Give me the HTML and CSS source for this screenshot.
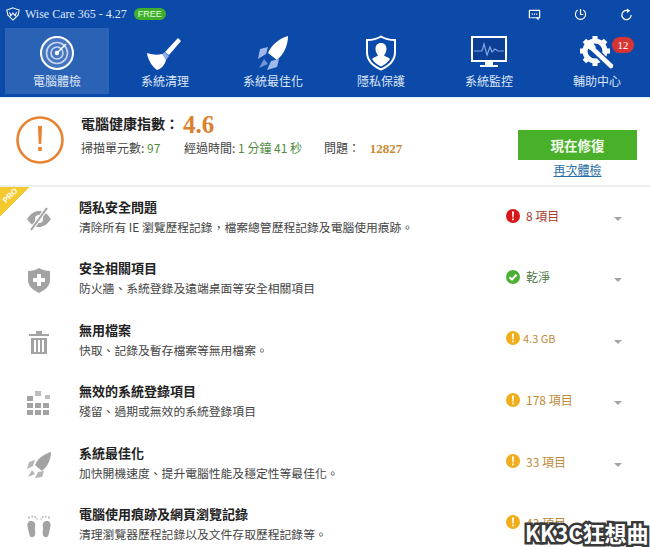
FILE: index.html
```html
<!DOCTYPE html>
<html lang="zh-Hant">
<head>
<meta charset="utf-8">
<title>Wise Care 365</title>
<link rel="stylesheet" href="styles.css">
</head>
<body>
<div class="app">
  <header class="head">
    <div class="titlebar">
      <svg class="logo" viewBox="0 0 16 16" width="14" height="14"><path d="M8 1 15 3.5 14 9 8 15 2 9 1 3.5Z" fill="none" stroke="#fff" stroke-width="1.2"/><path d="M4 6 5.5 10 8 7 10.5 10 12 6" fill="none" stroke="#fff" stroke-width="1.2"/></svg>
      <span class="apptitle">Wise Care 365 - 4.27</span>
      <span class="free">FREE</span>
      <span class="winbtns">
        <svg viewBox="0 0 14 14" width="13" height="13"><path d="M1.5 2.5H12.5V10.5H3.5M1.5 2.5V10.5H3" fill="none" stroke="#fff" stroke-width="1.3"/><path d="M4 6.5H5.3M6.4 6.5H7.7M8.8 6.5H10" stroke="#fff" stroke-width="1.4"/><path d="M11 10.5V12.5L9 10.5" fill="#fff" stroke="#fff"/></svg>
        <svg viewBox="0 0 14 14" width="13" height="13"><path d="M4 2.2A5.5 5.5 0 1 0 10 2.2" fill="none" stroke="#fff" stroke-width="1.2"/><path d="M7 1V7H10" fill="none" stroke="#fff" stroke-width="1.3"/></svg>
        <svg viewBox="0 0 14 14" width="13" height="13"><path d="M9.5 3.2A5 5 0 1 0 12 7.5" fill="none" stroke="#fff" stroke-width="1.3"/><path d="M7.5 0.5V5.5L11 3Z" fill="#fff"/></svg>
      </span>
    </div>
    <nav class="nav">
      <div class="navitem active">
        <svg viewBox="0 0 36 36" width="36" height="36"><circle cx="18" cy="18" r="16" fill="#7f9fd6" fill-opacity=".35" stroke="#fff" stroke-width="2"/><circle cx="18" cy="18" r="10.5" fill="none" stroke="#c7d6f0" stroke-width="1.6"/><circle cx="18" cy="18" r="6" fill="none" stroke="#c7d6f0" stroke-width="1.6"/><circle cx="18" cy="18" r="2.2" fill="#fff"/><path d="M18 18 27 9" stroke="#fff" stroke-width="1.5"/></svg>
        <span>電腦體檢</span>
      </div>
      <div class="navitem">
        <svg viewBox="0 0 40 36" width="40" height="36"><path d="M20 17 33 3 36 6 24 20Z" fill="#fff"/><path d="M20 17 24 21 21 25 16 20Z" fill="#8fb0e6"/><path d="M2 18C8 20 13 20 17 19L21 25C20 30 16 34 12 35 8 32 3 26 2 18Z" fill="#fff"/></svg>
        <span>系統清理</span>
      </div>
      <div class="navitem">
        <svg viewBox="0 0 36 36" width="36" height="36"><path d="M33 1C33 10 29 19 22 25L13 18C17 9 25 3 33 1Z" fill="#fff"/><path d="M13 12 5 14 3 24 11 19ZM24 24 22 32 12 35 16 26Z" fill="#9db9ea"/><path d="M9 24 4 33 13 29Z" fill="#6f95dc"/></svg>
        <span>系統最佳化</span>
      </div>
      <div class="navitem">
        <svg viewBox="0 0 32 36" width="32" height="36"><path d="M16 1.5C20 4 25 5 30 5V17C30 25 24 31 16 34.5 8 31 2 25 2 17V5C7 5 12 4 16 1.5Z" fill="none" stroke="#fff" stroke-width="2"/><path d="M16 8C19.5 8 21.5 10.5 21.5 14 21.5 17 20 19 19 20.5 21 22 24 22.5 25 24 23 27 20 30 16 31.500 12 30 9 27 7 24 8 22.500 11 22 13 20.500 12 19 10.500 17 10.500 14 10.500 10.500 12.500 8 16 8Z" fill="#fff"/></svg>
        <span>隱私保護</span>
      </div>
      <div class="navitem">
        <svg viewBox="0 0 36 36" width="36" height="36"><rect x="1" y="2" width="34" height="24" fill="#0c3f94" stroke="#fff" stroke-width="2"/><path d="M3 16H11L13 9 16 20 19 12 21 17 24 14 27 16H33" fill="none" stroke="#7fa4e4" stroke-width="1.2"/><path d="M14 27H22V30H27V32H9V30H14Z" fill="#fff"/></svg>
        <span>系統監控</span>
      </div>
      <div class="navitem">
        <span class="gear">
          <svg viewBox="0 0 36 36" width="36" height="36"><circle cx="16" cy="16" r="10" fill="none" stroke="#fff" stroke-width="5"/><path d="M16 1V6M16 26V31M1 16H6M26 16H31M5.400 5.400 9 9M23 23 26.600 26.600M26.600 5.400 23 9M9 23 5.400 26.600" stroke="#fff" stroke-width="5"/><path d="M13 13 31 31" stroke="#0b4aa9" stroke-width="8"/><path d="M14 14 32 31" stroke="#fff" stroke-width="4.500" stroke-linecap="round"/><path d="M9 9 14 8 17 12 13 16 8 13Z" fill="#fff"/></svg>
          <b class="badge">12</b>
        </span>
        <span>輔助中心</span>
      </div>
    </nav>
  </header>

  <section class="summary">
    <svg class="bigalert" viewBox="0 0 48 48" width="48" height="48"><circle cx="24" cy="24" r="22.500" fill="none" stroke="#e8822e" stroke-width="2.600"/><path d="M22 10H26L25.300 28H22.700Z" fill="#e8822e"/><rect x="22.200" y="31" width="3.600" height="4" fill="#e8822e"/></svg>
    <div class="sumtext">
      <div class="sumhead"><strong>電腦健康指數：</strong><em class="score">4.6</em></div>
      <div class="sumstats">
        <span>掃描單元數: <i class="good">97</i></span>
        <span>經過時間: <i class="good">1 分鐘 41 秒</i></span>
        <span>問題： <b class="count">12827</b></span>
      </div>
    </div>
    <div class="actions">
      <button class="fix">現在修復</button>
      <a class="again" href="#">再次體檢</a>
    </div>
  </section>

  <main class="list">
    <span class="pro"><span>PRO</span></span>
    <div class="row">
      <svg class="rowicon" viewBox="0 0 28 28" width="28" height="28"><path d="M2 14C6 8 10 6 14 6S22 8 26 14C22 20 18 22 14 22S6 20 2 14Z" fill="#a3a3a3"/><circle cx="14" cy="14" r="4" fill="#fff"/><path d="M6 25 22 3" stroke="#fff" stroke-width="4"/><path d="M6 25 22 3" stroke="#a3a3a3" stroke-width="2"/></svg>
      <div class="rowtext"><h3>隱私安全問題</h3><p>清除所有 IE 瀏覽歷程記錄，檔案總管歷程記錄及電腦使用痕跡。</p></div>
      <div class="status red"><svg viewBox="0 0 14 14" width="14" height="14"><circle cx="7" cy="7" r="7" fill="#d81818"/><path d="M6 2.500H8L7.600 8.500H6.400ZM6.200 9.500H7.800V11.200H6.200Z" fill="#fff"/></svg><span>8 項目</span></div>
      <span class="arrow"></span>
    </div>
    <div class="row">
      <svg class="rowicon" viewBox="0 0 28 28" width="28" height="28"><path d="M14 2C17 4 21 5 25 5V14C25 20 20 24 14 27 8 24 3 20 3 14V5C7 5 11 4 14 2Z" fill="#a3a3a3"/><path d="M12 8H16V12H20V16H16V20H12V16H8V12H12Z" fill="#fff"/></svg>
      <div class="rowtext"><h3>安全相關項目</h3><p>防火牆、系統登錄及遠端桌面等安全相關項目</p></div>
      <div class="status green"><svg viewBox="0 0 14 14" width="14" height="14"><circle cx="7" cy="7" r="7" fill="#4cb034"/><path d="M3.500 7.200 6 9.500 10.500 4.800" fill="none" stroke="#fff" stroke-width="2"/></svg><span>乾淨</span></div>
      <span class="arrow"></span>
    </div>
    <div class="row">
      <svg class="rowicon" viewBox="0 0 28 28" width="28" height="28"><path d="M4 6H24V8H4ZM11 3H17V6H11Z" fill="#a3a3a3"/><path d="M6 10H22V26H6Z" fill="#a3a3a3"/><path d="M10 12V24M14 12V24M18 12V24" stroke="#fff" stroke-width="2"/></svg>
      <div class="rowtext"><h3>無用檔案</h3><p>快取、記錄及暫存檔案等無用檔案。</p></div>
      <div class="status amber tight"><svg viewBox="0 0 14 14" width="14" height="14"><circle cx="7" cy="7" r="7" fill="#f0ae1c"/><path d="M6 2.500H8L7.600 8.500H6.400ZM6.200 9.500H7.800V11.200H6.200Z" fill="#fff"/></svg><span>4.3 GB</span></div>
      <span class="arrow"></span>
    </div>
    <div class="row">
      <svg class="rowicon" viewBox="0 0 28 28" width="28" height="28" fill="#a3a3a3"><rect x="2" y="7" width="6" height="5"/><rect x="10" y="2" width="6" height="5" fill="#bdbdbd"/><rect x="2" y="14" width="6" height="5"/><rect x="10" y="14" width="6" height="5"/><rect x="2" y="21" width="6" height="5"/><rect x="10" y="21" width="6" height="5"/><rect x="18" y="21" width="6" height="5"/><rect x="18" y="14" width="6" height="5"/><rect x="20" y="6" width="5" height="4" fill="#bdbdbd"/></svg>
      <div class="rowtext"><h3>無效的系統登錄項目</h3><p>殘留、過期或無效的系統登錄項目</p></div>
      <div class="status amber"><svg viewBox="0 0 14 14" width="14" height="14"><circle cx="7" cy="7" r="7" fill="#f0ae1c"/><path d="M6 2.500H8L7.600 8.500H6.400ZM6.200 9.500H7.800V11.200H6.200Z" fill="#fff"/></svg><span>178 項目</span></div>
      <span class="arrow"></span>
    </div>
    <div class="row">
      <svg class="rowicon" viewBox="0 0 28 28" width="28" height="28"><path d="M26 1C26 8 23 15 17 20L10 14C13 7 19 3 26 1Z" fill="#a3a3a3"/><path d="M10 9 4 11 2 18 8 15ZM19 20 17 26 10 27 13 21ZM7 19 3 26 10 23Z" fill="#b5b5b5"/></svg>
      <div class="rowtext"><h3>系統最佳化</h3><p>加快開機速度、提升電腦性能及穩定性等最佳化。</p></div>
      <div class="status amber"><svg viewBox="0 0 14 14" width="14" height="14"><circle cx="7" cy="7" r="7" fill="#f0ae1c"/><path d="M6 2.500H8L7.600 8.500H6.400ZM6.200 9.500H7.800V11.200H6.200Z" fill="#fff"/></svg><span>33 項目</span></div>
      <span class="arrow"></span>
    </div>
    <div class="row">
      <svg class="rowicon" viewBox="0 0 28 28" width="28" height="28" fill="#a3a3a3"><path d="M6 9C9 9 11 11 10 15 9.500 18 11 20 10 23 9 26 5 26 4.500 23 4 20 3 18 2.500 14 2 11 3.500 9 6 9Z"/><path d="M22 9C19 9 17 11 18 15 18.500 18 17 20 18 23 19 26 23 26 23.500 23 24 20 25 18 25.500 14 26 11 24.500 9 22 9Z"/><path d="M3 5.500H5M6.500 4.500H8M9.500 5H11M11.500 7H12.500M15.500 7H16.500M17 5H18.500M20 4.500H21.500M23 5.500H25" stroke="#bdbdbd" stroke-width="2"/></svg>
      <div class="rowtext"><h3>電腦使用痕跡及網頁瀏覽記錄</h3><p>清理瀏覽器歷程記錄以及文件存取歷程記錄等。</p></div>
      <div class="status amber"><svg viewBox="0 0 14 14" width="14" height="14"><circle cx="7" cy="7" r="7" fill="#f0ae1c"/><path d="M6 2.500H8L7.600 8.500H6.400ZM6.200 9.500H7.800V11.200H6.200Z" fill="#fff"/></svg><span>43 項目</span></div>
      <span class="arrow"></span>
    </div>
  </main>
  <div class="watermark">KK3C狂想曲</div>
</div>
</body>
</html>
```
FILE: styles.css
```css
* { box-sizing: border-box; }
html, body { margin: 0; padding: 0; background: #fff; }
body { font-family: "Noto Sans CJK TC", "Liberation Sans", sans-serif; color: #333; }
.app { position: relative; width: 650px; height: 547px; overflow: hidden; }

.head { height: 98px; background: #0b4aa9; border-bottom: 1px solid #e6f2fb; color: #fff; }
.titlebar { display: flex; align-items: center; height: 28px; padding: 0 17px 0 6px; }
.logo { margin-right: 5px; }
.apptitle { font: 12px "Liberation Serif", serif; color: #dfe8f6; }
.free { margin-left: 7px; width: 32px; height: 12px; border-radius: 6px; background: #3fb02b; color: #e6ffe0; font: 9px/12px "Liberation Sans", sans-serif; text-align: center; }
.winbtns { margin-left: auto; display: flex; gap: 33px; }
.nav { display: grid; grid-template-columns: repeat(6, 108px); padding-left: 3px; }
.navitem { display: flex; flex-direction: column; align-items: center; justify-content: flex-end; height: 66px; margin: 0 2px; padding-bottom: 5px; gap: 1px; font-size: 12px; line-height: 17px; color: #dbe5f5; }
.navitem svg { display: block; }
.navitem.active { background: #2a62b6; }
.gear { position: relative; display: block; height: 36px; }
.badge { position: absolute; left: 33px; top: 2px; width: 22px; height: 16px; border-radius: 8px; background: #d93434; color: #fff; font: 11px/16px "Liberation Serif", serif; text-align: center; }

.summary { display: flex; height: 89px; align-items: flex-start; padding-left: 16px; border-bottom: 2px solid #eeeeee; }
.bigalert { margin-top: 18px; flex: none; }
.sumtext { margin-left: 17px; padding-top: 13px; }
.sumhead { display: flex; align-items: center; height: 24px; }
.sumhead strong { font-size: 14px; font-weight: 700; color: #222; }
.score { margin: 4px 0 0 4px; font: 700 25px/24px "Liberation Serif", serif; color: #d9812f; }
.sumstats { display: flex; margin-top: 5px; font-size: 12px; color: #444; line-height: 16px; }
.sumstats span { white-space: nowrap; }
.sumstats span:nth-child(1) { width: 103px; }
.sumstats span:nth-child(2) { width: 140px; }
.good { font-style: normal; color: #4f8a3f; }
.count { margin-left: 7px; font: 700 13px "Liberation Serif", serif; color: #c98a35; }
.actions { margin-left: auto; margin-right: 13px; margin-top: 32px; width: 119px; display: flex; flex-direction: column; align-items: center; }
.fix { width: 119px; height: 30px; border: 0; background: #49b02a; color: #f1f9ec; font: 700 13.500px/30px "Noto Sans CJK TC", sans-serif; padding: 0; }
.again { margin-top: 1px; font-size: 12px; line-height: 17px; color: #2a6ea6; }

.list { position: relative; }
.pro { position: absolute; left: 0; top: 0; width: 30px; height: 29px; background: linear-gradient(to bottom right, #f4c92f 50%, transparent 50%); }
.pro span { position: absolute; left: 2px; top: 4px; font: 700 8px/10px "Liberation Sans", sans-serif; color: #fff; transform: rotate(-45deg); }
.row { display: flex; align-items: flex-start; height: 61.400px; padding-left: 25px; }
.rowicon { flex: none; margin-top: 18px; }
.rowtext { margin-left: 26px; width: 427px; padding-top: 11px; flex: none; }
.rowtext h3 { margin: 0; font-size: 13px; line-height: 18px; font-weight: 700; color: #222; }
.rowtext p { margin: 2px 0 0; font-size: 11.800px; line-height: 17px; color: #444; white-space: nowrap; }
.status { display: flex; align-items: center; gap: 6px; margin-top: 20px; width: 108px; font-size: 12px; line-height: 17px; flex: none; }
.status.tight { gap: 3px; font-size: 11px; }
.status svg { flex: none; }
.red { color: #a83a2e; }
.green { color: #4e7a44; }
.amber { color: #c08a3a; }
.arrow { width: 0; height: 0; margin-top: 30px; border-left: 4px solid transparent; border-right: 4px solid transparent; border-top: 4px solid #a5a5a5; }

.watermark { position: absolute; left: 525px; top: 520px; font-size: 22px; line-height: 25px; font-weight: 700; color: #fff; -webkit-text-stroke: 5px #3a3a3a; paint-order: stroke fill; white-space: nowrap; }
```
